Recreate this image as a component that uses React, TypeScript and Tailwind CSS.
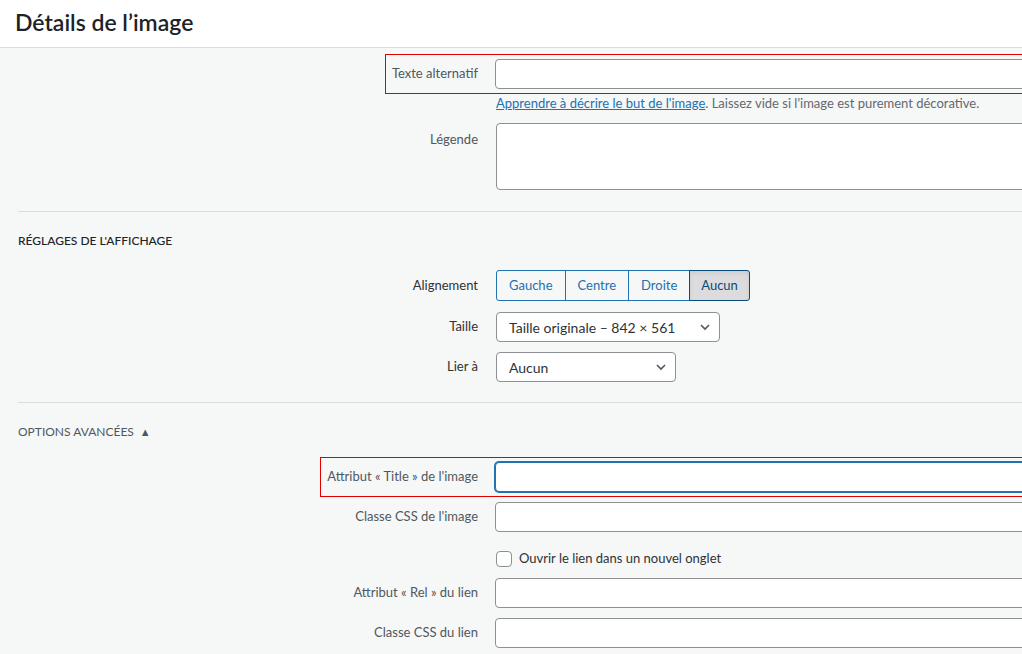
import { FC, ReactNode } from "react";

const font = { fontFamily: "Lato, 'Open Sans', sans-serif" };

const Chevron = () => (
	<svg width="12" height="12" viewBox="0 0 12 12" className="text-[#50575e]">
		<path d="M2 4l4 4 4-4" fill="none" stroke="currentColor" strokeWidth="1.6" />
	</svg>
);

interface FieldRowProps {
	label: string;
	marked?: boolean;
	focused?: boolean;
}

// label + wide text input, right-aligned so the input starts at x=496
const FieldRow: FC<FieldRowProps> = ({ label, marked, focused }) => (
	<div className="flex justify-end">
		<div
			className={
				"flex items-center h-[40px] pl-[6px] py-[4px] border " +
				(marked ? "border-[#e00000]" : "border-transparent")
			}
		>
			<label className="text-[13px] text-[#50575e] pr-[17px] whitespace-nowrap">{label}</label>
			<div
				className={
					"w-[604px] h-[30px] bg-white rounded-[4px] " +
					(focused
						? "border border-[#2271b1] shadow-[0_0_0_1px_#2271b1]"
						: "border border-[#8c8f94]")
				}
			/>
		</div>
	</div>
);

const SettingRow: FC<{ label: string; children: ReactNode; className?: string }> = ({
	label,
	children,
	className,
}) => (
	<div className={"flex items-center " + (className ?? "")}>
		<div className="w-[478px] text-right text-[13px] text-[#2c3338] shrink-0">{label}</div>
		<div className="ml-[18px]">{children}</div>
	</div>
);

const Select: FC<{ value: string; width: string }> = ({ value, width }) => (
	<div
		className={
			"h-[30px] bg-white border border-[#8c8f94] rounded-[4px] flex items-center justify-between pl-[12px] pr-[8px] text-[14px] text-[#2c3338] " +
			width
		}
	>
		<span>{value}</span>
		<Chevron />
	</div>
);

export default function App() {
	const align = ["Gauche", "Centre", "Droite"];
	return (
		<div className="w-[1022px] h-[654px] overflow-hidden bg-[#f6f7f7]" style={font}>
			<div className="h-[48px] bg-white border-b border-[#dcdcde] flex items-center px-[15px]">
				<h1 className="text-[23px] font-semibold text-[#1d2327] leading-none pb-[2px]">
					Détails de l’image
				</h1>
			</div>

			<div className="w-[1100px]">
				<div className="mt-[6px]">
					<FieldRow label="Texte alternatif" marked />
				</div>
				<p className="pl-[496px] text-[13px] leading-[18px] text-[#646970] whitespace-nowrap">
					<a className="text-[#2271b1] underline">Apprendre à décrire le but de l'image</a>. Laissez vide
					si l'image est purement décorative.
				</p>

				<div className="flex mt-[11px]">
					<div className="w-[478px] text-right text-[13px] text-[#50575e] pt-[7px] shrink-0">Légende</div>
					<div className="ml-[18px] w-[604px] h-[67px] bg-white border border-[#8c8f94] rounded-[4px]" />
				</div>

				<div className="ml-[18px] mt-[21px] border-t border-[#dcdcde]" />

				<h2 className="ml-[18px] mt-[20px] text-[12px] leading-[18px] font-medium text-[#1d2327] uppercase">
					Réglages de l'affichage
				</h2>

				<SettingRow label="Alignement" className="mt-[20px]">
					<div className="flex h-[31px] text-[13px]">
						{align.map((a, i) => (
							<div
								key={a}
								className={
									"flex items-center px-[12px] border border-[#2271b1] text-[#2271b1] bg-[#f6f7f7] " +
									(i === 0 ? "rounded-l-[3px]" : "-ml-px")
								}
							>
								{a}
							</div>
						))}
						<div className="flex items-center px-[11px] -ml-px border border-[#0a4b78] text-[#0a4b78] bg-[#dcdcde] rounded-r-[3px] shadow-[inset_0_2px_4px_rgba(0,0,0,0.08)]">
							Aucun
						</div>
					</div>
				</SettingRow>

				<SettingRow label="Taille" className="mt-[11px]">
					<Select value="Taille originale – 842 × 561" width="w-[224px]" />
				</SettingRow>

				<SettingRow label="Lier à" className="mt-[10px]">
					<Select value="Aucun" width="w-[180px]" />
				</SettingRow>

				<div className="ml-[18px] mt-[20px] border-t border-[#dcdcde]" />

				<div className="ml-[18px] mt-[20px] flex items-center gap-[6px] text-[12px] leading-[18px] text-[#50575e] uppercase">
					<span>Options avancées</span>
					<span className="text-[11px]">▲</span>
				</div>

				<div className="mt-[16px]">
					<FieldRow label="Attribut « Title » de l'image" marked focused />
					<FieldRow label="Classe CSS de l'image" />
				</div>

				<div className="pl-[496px] mt-[12px] mb-[4px] flex items-center gap-[7px]">
					<div className="w-[16px] h-[16px] bg-white border border-[#8c8f94] rounded-[4px]" />
					<span className="text-[13px] text-[#2c3338]">Ouvrir le lien dans un nouvel onglet</span>
				</div>

				<FieldRow label="Attribut « Rel » du lien" />
				<FieldRow label="Classe CSS du lien" />
			</div>
		</div>
	);
}
